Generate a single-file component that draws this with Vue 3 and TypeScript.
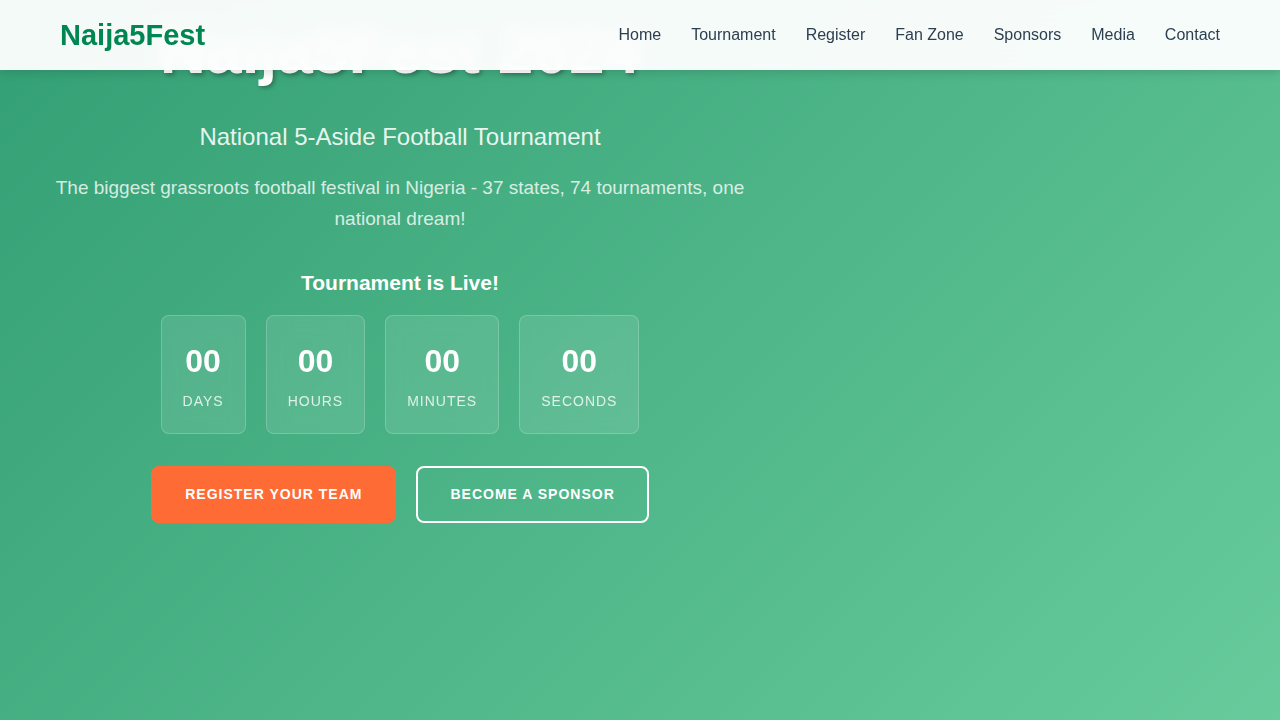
<script setup lang="ts">
import { onMounted, onUnmounted, ref } from 'vue'

interface NavLink {
  label: string
  href: string
}

interface TimeUnit {
  label: string
  value: string
}

const links: NavLink[] = [
  { label: 'Home', href: '#home' },
  { label: 'Tournament', href: '#tournament' },
  { label: 'Register', href: '#register' },
  { label: 'Fan Zone', href: '#fan-zone' },
  { label: 'Sponsors', href: '#sponsors' },
  { label: 'Media', href: '#media' },
  { label: 'Contact', href: '#contact' },
]

const kickoff = new Date('2024-06-01T00:00:00').getTime()

function timeLeft(): TimeUnit[] {
  const seconds = Math.max(0, Math.floor((kickoff - Date.now()) / 1000))
  const pad = (n: number) => String(n).padStart(2, '0')
  return [
    { label: 'Days', value: pad(Math.floor(seconds / 86400)) },
    { label: 'Hours', value: pad(Math.floor(seconds / 3600) % 24) },
    { label: 'Minutes', value: pad(Math.floor(seconds / 60) % 60) },
    { label: 'Seconds', value: pad(seconds % 60) },
  ]
}

const units = ref<TimeUnit[]>(timeLeft())
let timer: number | undefined

onMounted(() => {
  timer = window.setInterval(() => (units.value = timeLeft()), 1000)
})
onUnmounted(() => window.clearInterval(timer))
</script>

<template>
  <header class="site-header">
    <div class="bar">
      <a class="logo" href="#home">Naija5Fest</a>
      <nav class="nav" aria-label="Main">
        <a v-for="link in links" :key="link.href" :href="link.href">{{ link.label }}</a>
      </nav>
    </div>
  </header>

  <main id="home" class="hero">
    <div class="content">
      <h1>Naija5Fest 2024</h1>
      <p class="subtitle">National 5-Aside Football Tournament</p>
      <p class="description">
        The biggest grassroots football festival in Nigeria - 37 states, 74 tournaments, one national dream!
      </p>
      <h2>Tournament is Live!</h2>
      <div class="countdown">
        <div v-for="unit in units" :key="unit.label" class="unit">
          <span class="value">{{ unit.value }}</span>
          <span class="label">{{ unit.label }}</span>
        </div>
      </div>
      <div class="actions">
        <a class="btn primary" href="#register">Register Your Team</a>
        <a class="btn outline" href="#sponsors">Become a Sponsor</a>
      </div>
    </div>
  </main>
</template>

<style>
body {
  margin: 0;
  font-family: "Liberation Sans", Arial, sans-serif;
}
</style>

<style scoped>
.site-header {
  position: fixed;
  top: 0;
  left: 0;
  right: 0;
  z-index: 10;
  background: rgba(255, 255, 255, 0.95);
  backdrop-filter: blur(10px);
  box-shadow: 0 2px 10px rgba(0, 0, 0, 0.15);
}

.bar {
  display: flex;
  align-items: center;
  justify-content: space-between;
  box-sizing: border-box;
  max-width: 1200px;
  min-height: 70px;
  margin: 0 auto;
  padding: 0 20px;
}

.logo {
  color: #008751;
  font-size: 29px;
  font-weight: 700;
  text-decoration: none;
}

.nav {
  display: flex;
  gap: 30px;
}

.nav a {
  color: #2c3e50;
  font-size: 16px;
  line-height: 26px;
  text-decoration: none;
}

.hero {
  box-sizing: border-box;
  min-height: 100vh;
  padding: 13px 0 48px;
  color: #fff;
  background: linear-gradient(135deg, #339f74 0%, #67cb9c 100%);
}

.content {
  box-sizing: border-box;
  max-width: 800px;
  padding: 0 20px;
  text-align: center;
}

h1 {
  margin: 0 0 28px;
  font-size: 64px;
  line-height: 77px;
  font-weight: 700;
  text-shadow: 2px 2px 4px rgba(0, 0, 0, 0.3);
}

.subtitle {
  margin: 0 0 16px;
  font-size: 24px;
  line-height: 38px;
  color: rgba(255, 255, 255, 0.9);
}

.description {
  margin: 0 0 32px;
  font-size: 19px;
  line-height: 31px;
  color: rgba(255, 255, 255, 0.8);
}

h2 {
  margin: 0 0 15px;
  font-size: 21px;
  line-height: 34px;
  font-weight: 700;
}

.countdown {
  display: flex;
  flex-wrap: wrap;
  justify-content: center;
  gap: 20px;
  margin-bottom: 32px;
}

.unit {
  display: flex;
  flex-direction: column;
  gap: 3px;
  padding: 20px 21px;
  border: 1px solid rgba(255, 255, 255, 0.2);
  border-radius: 8px;
  background: rgba(255, 255, 255, 0.1);
  backdrop-filter: blur(10px);
}

.value {
  font-size: 32px;
  line-height: 51px;
  font-weight: 700;
}

.label {
  font-size: 14px;
  line-height: 23px;
  letter-spacing: 1px;
  text-transform: uppercase;
  color: rgba(255, 255, 255, 0.8);
}

.actions {
  display: flex;
  flex-wrap: wrap;
  justify-content: center;
  gap: 20px;
}

.btn {
  padding: 15px 32px;
  border: 2px solid #fff;
  border-radius: 8px;
  color: #fff;
  font-size: 14px;
  line-height: 23px;
  font-weight: 700;
  letter-spacing: 1px;
  text-transform: uppercase;
  text-decoration: none;
}

.primary {
  border-color: #ff6b35;
  background: #ff6b35;
}
</style>
